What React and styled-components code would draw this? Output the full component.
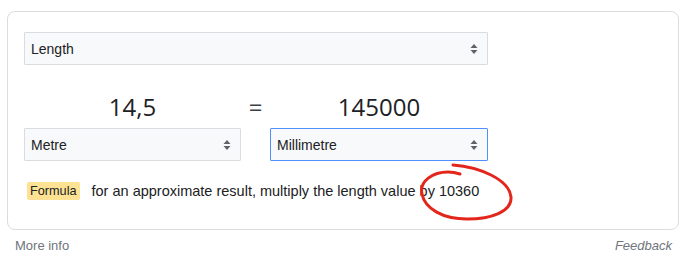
import React from 'react'
import styled, { createGlobalStyle } from 'styled-components'

const GlobalStyle = createGlobalStyle`
  body {
    margin: 0;
    background: #fff;
    font-family: "Liberation Sans", Arial, sans-serif;
    color: #202124;
  }
`;

const Page = styled.div`
  width: 690px;
  height: 260px;
  padding: 11px 11px 0 7px;
  box-sizing: border-box;
`;

const Card = styled.div`
  position: relative;
  width: 672px;
  height: 219px;
  box-sizing: border-box;
  border: 1px solid #dadce0;
  border-radius: 8px;
  padding: 20px 16px 0 16px;
`;

const Select = styled.div`
  height: 33px;
  box-sizing: border-box;
  display: flex;
  align-items: center;
  justify-content: space-between;
  padding: 0 9px 0 6px;
  background: #f8f9fa;
  border: 1px solid ${p => (p.$active ? '#4d90fe' : '#dadce0')};
  border-radius: 1px;
  font-size: 14px;
  color: #202124;
  width: ${p => p.$width || 'auto'};
`;

const Converter = styled.div`
  display: grid;
  grid-template-columns: 217px 29px 218px;
  margin-top: 27px;
  row-gap: 6px;
`;

const Value = styled.div`
  font-family: "Open Sans", Roboto, sans-serif;
  font-size: 24px;
  line-height: 30px;
  text-align: center;
  color: #202124;
`;

const Equals = styled(Value)`
  color: #3c4043;
`;

const FormulaRow = styled.div`
  display: flex;
  align-items: center;
  margin-top: 21px;
  padding-left: 3px;
  font-size: 14.5px;
`;

const Badge = styled.span`
  background: #fde293;
  border-radius: 2px;
  padding: 1px 3px;
  font-size: 12.7px;
  line-height: 16px;
  margin-right: 12px;
`;

const Footer = styled.div`
  display: flex;
  justify-content: space-between;
  padding: 8px 7px 0 8px;
  font-size: 13px;
  color: #70757a;
`;

const Feedback = styled.span`
  font-style: italic;
`;

const Scribble = styled.svg`
  position: absolute;
  left: 0;
  top: 0;
  pointer-events: none;
`;

function Arrows() {
  return (
    <svg width="8" height="12" viewBox="0 0 8 12">
      <path d="M0.5 5 L4 1 L7.5 5 Z M0.5 7 L4 11 L7.5 7 Z" fill="#5f6368" />
    </svg>
  );
}

export default function App() {
  return (
    <Page>
      <GlobalStyle />
      <Card>
        <Select $width="464px">
          <span>Length</span>
          <Arrows />
        </Select>
        <Converter>
          <Value>14,5</Value>
          <Equals>=</Equals>
          <Value>145000</Value>
          <Select>
            <span>Metre</span>
            <Arrows />
          </Select>
          <span />
          <Select $active>
            <span>Millimetre</span>
            <Arrows />
          </Select>
        </Converter>
        <FormulaRow>
          <Badge>Formula</Badge>
          <span>for an approximate result, multiply the length value by 10360</span>
        </FormulaRow>
        <Scribble width="672" height="219" viewBox="7 11 672 219">
          <path
            d="M452 164 C478 166 508 178 510 196 C511 211 490 218 466 218 C442 218 424 208 421 193 C418 180 432 171 447 171 C452 171 456 172 459 173"
            fill="none"
            stroke="#e3261c"
            strokeWidth="3"
            strokeLinecap="round"
          />
        </Scribble>
      </Card>
      <Footer>
        <span>More info</span>
        <Feedback>Feedback</Feedback>
      </Footer>
    </Page>
  );
}
